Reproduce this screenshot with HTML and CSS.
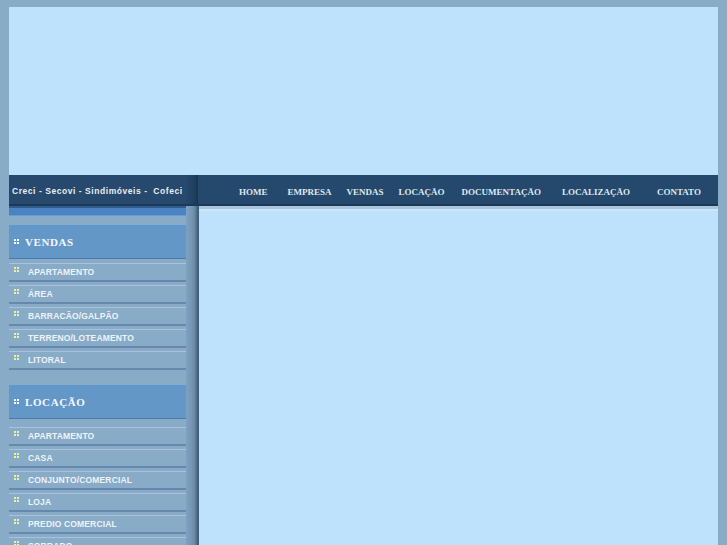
FILE: index.html
```html
<!DOCTYPE html>
<html lang="pt-BR">
<head>
<meta charset="utf-8">
<title>Imobiliária</title>
<link rel="stylesheet" href="styles.css">
</head>
<body>
<div class="page">
  <header class="banner"></header>
  <nav class="navbar">
    <div class="nav-left">Creci - Secovi - Sindimóveis - &nbsp;Cofeci</div>
    <ul class="nav-menu">
      <li>HOME</li>
      <li>EMPRESA</li>
      <li>VENDAS</li>
      <li>LOCAÇÃO</li>
      <li>DOCUMENTAÇÃO</li>
      <li>LOCALIZAÇÃO</li>
      <li>CONTATO</li>
    </ul>
  </nav>
  <div class="main">
    <aside class="sidebar">
      <div class="side-inner">
        <div class="side-topbar"></div>
        <h2 class="side-head"><span class="dots"></span>VENDAS</h2>
        <ul class="side-list">
          <li><span class="dots"></span>APARTAMENTO</li>
          <li><span class="dots"></span>ÁREA</li>
          <li><span class="dots"></span>BARRACÃO/GALPÃO</li>
          <li><span class="dots"></span>TERRENO/LOTEAMENTO</li>
          <li><span class="dots"></span>LITORAL</li>
        </ul>
        <h2 class="side-head second"><span class="dots"></span>LOCAÇÃO</h2>
        <ul class="side-list">
          <li><span class="dots"></span>APARTAMENTO</li>
          <li><span class="dots"></span>CASA</li>
          <li><span class="dots"></span>CONJUNTO/COMERCIAL</li>
          <li><span class="dots"></span>LOJA</li>
          <li><span class="dots"></span>PREDIO COMERCIAL</li>
          <li><span class="dots"></span>SOBRADO</li>
        </ul>
      </div>
      <div class="side-shadow"></div>
    </aside>
    <section class="content"></section>
  </div>
</div>
</body>
</html>
```

FILE: styles.css
```css
* { box-sizing: border-box; margin: 0; padding: 0; }
html, body { height: 100%; overflow: hidden; }
body {
  background: #88abc8;
  padding: 7px 9px 0 9px;
  font-family: "Liberation Sans", Arial, sans-serif;
}
.page { width: 709px; height: 538px; display: flex; flex-direction: column; }
.banner { height: 168px; background: #bee2fb; flex: none; }
.navbar {
  height: 31px; flex: none; display: flex;
  background: #24496d;
  box-shadow: inset 0 -2px 0 #1c3a58;
}
.nav-left {
  width: 189px; flex: none;
  background: linear-gradient(to right, #26496d 0, #26496d 176px, #1f3f60 186px, #17324d 189px);
  color: #e8eef4; font-size: 8.5px; font-weight: bold; letter-spacing: 0.55px;
  line-height: 31px; padding-left: 3px; padding-top: 1px; white-space: nowrap;
  box-shadow: inset 0 -2px 0 #1c3a58;
}
.nav-menu {
  list-style: none; display: flex; align-items: center; padding-left: 41px; padding-top: 3px;
  font-family: "Liberation Serif", "Times New Roman", serif;
  font-size: 9px; font-weight: bold; color: #dfe7ef; white-space: nowrap;
}
.nav-menu li:nth-child(1) { margin-right: 20px; }
.nav-menu li:nth-child(2) { margin-right: 15px; }
.nav-menu li:nth-child(3) { margin-right: 15px; }
.nav-menu li:nth-child(4) { margin-right: 17px; }
.nav-menu li:nth-child(5) { margin-right: 21px; }
.nav-menu li:nth-child(6) { margin-right: 27px; }
.main { flex: 1; display: flex; min-height: 0; }
.sidebar { width: 190px; flex: none; display: flex; background: #88abc8; }
.side-inner { width: 177px; flex: none; }
.side-shadow {
  flex: 1;
  background: linear-gradient(to right, #7fa2c1 0, #7495b3 6px, #6686a4 9px, #4b6883 11px, #3f5a73 13px);
}
.side-topbar {
  height: 10px; margin-bottom: 8px;
  background: #4a83c3;
  border-top: 2px solid #2f5d8e;
  border-bottom: 1px solid #6a9bd0;
}
.side-head {
  display: flex; align-items: center; height: 35px; margin-bottom: 1px;
  background: #6397c8;
  border-top: 1px solid #7fadd8; border-bottom: 1px solid #4c7aa6;
  font-family: "Liberation Serif", "Times New Roman", serif;
  font-size: 11px; font-weight: bold; color: #f4f8fc; letter-spacing: 0.6px;
  padding-left: 5px;
}
.side-head.second { margin-top: 14px; margin-bottom: 5px; }
.side-list { list-style: none; }
.side-list li {
  display: flex; align-items: center; height: 22px;
  border-top: 3px solid #88abc8;
  box-shadow: inset 0 1px 0 #a8c3db;
  border-bottom: 2px solid #6589ac;
  font-size: 8.5px; font-weight: bold; color: #eef3f8; letter-spacing: 0.15px;
  padding-left: 5px; white-space: nowrap;
}
.dots {
  width: 5px; height: 5px; flex: none; margin-right: 9px; margin-top: -4px;
  background-image:
    linear-gradient(#eef0a2, #eef0a2), linear-gradient(#eef0a2, #eef0a2),
    linear-gradient(#eef0a2, #eef0a2), linear-gradient(#eef0a2, #eef0a2);
  background-size: 2px 2px;
  background-repeat: no-repeat;
  background-position: 0 0, 3px 0, 0 3px, 3px 3px;
}
.side-head .dots {
  margin-top: 0; margin-right: 6px;
  background-image:
    linear-gradient(#ffffff, #ffffff), linear-gradient(#ffffff, #ffffff),
    linear-gradient(#ffffff, #ffffff), linear-gradient(#ffffff, #ffffff);
}
.content {
  flex: 1; background: #bee2fb;
  box-shadow: inset 0 3px 0 #a9c6de, inset 0 5px 0 #c9e6fb;
}
```
